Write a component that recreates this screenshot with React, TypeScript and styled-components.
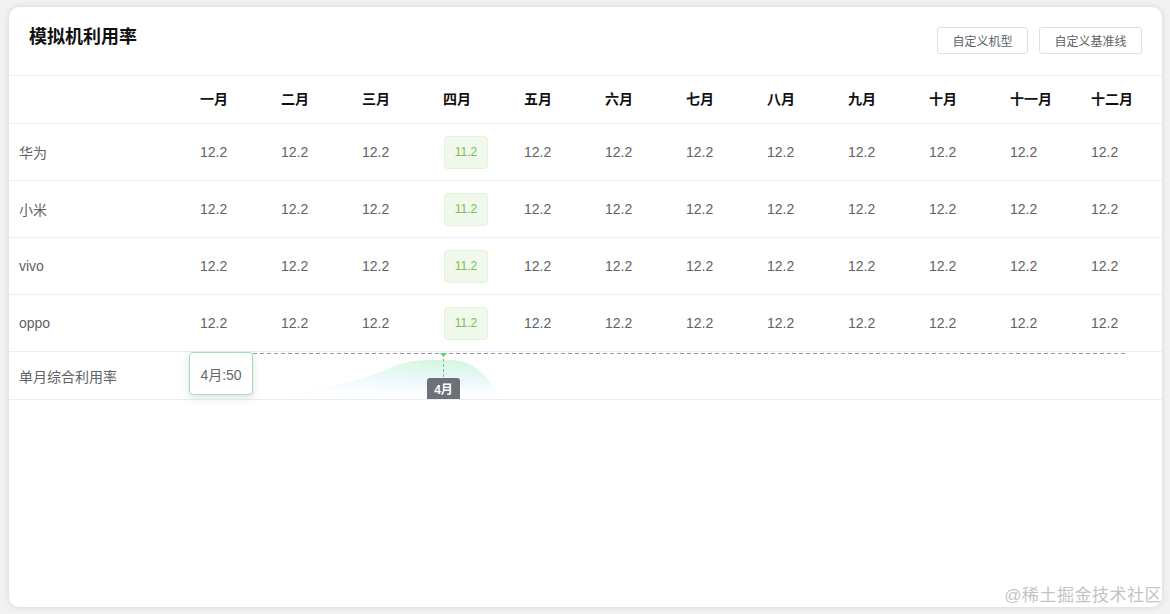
import React from 'react';
import styled, { createGlobalStyle } from 'styled-components';

const GlobalStyle = createGlobalStyle`
  html, body {
    margin: 0;
    padding: 0;
    background: #f2f2f2;
  }
  body {
    padding: 7px 8px 7px 9px;
    font-family: "Liberation Sans", "Noto Sans CJK SC", sans-serif;
  }
`;

const months = ['一月', '二月', '三月', '四月', '五月', '六月', '七月', '八月', '九月', '十月', '十一月', '十二月'];
const brands = ['华为', '小米', 'vivo', 'oppo'];
const highlightIndex = 3; // 四月

const Card = styled.div`
  position: relative;
  width: 1153px;
  height: 600px;
  box-sizing: border-box;
  background: #fff;
  border-radius: 10px;
  box-shadow: 0 0 6px rgba(0, 0, 0, 0.12);
  overflow: hidden;
`;

const Header = styled.div`
  height: 68px;
  padding: 0 20px;
  display: flex;
  justify-content: space-between;
  align-items: flex-start;
  border-bottom: 1px solid #ebeef5;
`;

const Title = styled.h2`
  margin: 0;
  padding-top: 20px;
  font-size: 18px;
  line-height: 20px;
  font-weight: 700;
  color: #111;
`;

const Actions = styled.div`
  display: flex;
  gap: 11px;
  padding-top: 20px;
`;

const Button = styled.button<{ w: number }>`
  width: ${(p) => p.w + 'px'};
  height: 27px;
  box-sizing: border-box;
  border: 1px solid #dcdfe6;
  border-radius: 3px;
  background: #fff;
  color: #606266;
  font-size: 12px;
  font-family: inherit;
  padding: 0;
  cursor: pointer;
`;

const Row = styled.div<{ h: number }>`
  display: grid;
  grid-template-columns: 181px repeat(12, 81px);
  height: ${(p) => p.h + 'px'};
  border-bottom: 1px solid #ebeef5;
`;

const Cell = styled.div<{ head?: boolean }>`
  display: flex;
  align-items: center;
  padding-left: 10px;
  padding-bottom: ${(p) => (p.head ? '4px' : '0')};
  font-size: 14px;
  color: ${(p) => (p.head ? '#111' : '#606266')};
  font-weight: ${(p) => (p.head ? 700 : 400)};
  white-space: nowrap;
`;

const LabelCell = styled(Cell)`
  padding-left: 10px;
`;

const TagWrap = styled.div`
  display: flex;
  align-items: center;
  padding-left: 11px;
`;

const Tag = styled.span`
  display: inline-flex;
  align-items: center;
  justify-content: center;
  width: 44px;
  height: 33px;
  box-sizing: border-box;
  background: #f0f9eb;
  border: 1px solid #e1f3d8;
  border-radius: 4px;
  color: #72c250;
  font-size: 12px;
`;

const ChartCell = styled.div`
  grid-column: 2 / span 12;
  position: relative;
`;

const Tooltip = styled.div`
  position: absolute;
  left: -1px;
  top: 0;
  width: 64px;
  height: 43px;
  box-sizing: border-box;
  display: flex;
  align-items: center;
  justify-content: center;
  background: #fff;
  border: 1px solid #9fe3b0;
  border-radius: 4px;
  box-shadow: 0 3px 8px rgba(0, 0, 0, 0.12);
  color: #666;
  font-size: 14px;
`;

const AxisLabel = styled.div`
  position: absolute;
  left: 237px;
  top: 26px;
  width: 33px;
  height: 21px;
  display: flex;
  align-items: center;
  justify-content: center;
  background: #6e7079;
  border-radius: 3px 3px 0 0;
  color: #fff;
  font-size: 12px;
  font-weight: 700;
`;

const Watermark = styled.div`
  position: absolute;
  right: 0;
  bottom: 1px;
  font-size: 17px;
  color: #c4c4c4;
  letter-spacing: 0.5px;
`;

function UsageChart() {
  // 点位: x = i * 85, 四月约在 253
  return (
    <svg width="972" height="47" style={{ display: 'block' }}>
      <defs>
        <linearGradient id="areaV" x1="0" y1="0" x2="0" y2="1">
          <stop offset="0" stopColor="#a6f0bd" stopOpacity="0.5" />
          <stop offset="0.6" stopColor="#d6f0fb" stopOpacity="0.45" />
          <stop offset="1" stopColor="#ffffff" stopOpacity="0.1" />
        </linearGradient>
        <linearGradient id="areaMask" x1="0" y1="0" x2="1" y2="0">
          <stop offset="0" stopColor="#fff" stopOpacity="0" />
          <stop offset="0.12" stopColor="#fff" stopOpacity="0.4" />
          <stop offset="0.25" stopColor="#fff" stopOpacity="1" />
          <stop offset="0.35" stopColor="#fff" stopOpacity="1" />
          <stop offset="0.5" stopColor="#fff" stopOpacity="0.5" />
          <stop offset="1" stopColor="#fff" stopOpacity="0.6" />
        </linearGradient>
        <mask id="fade">
          <rect x="0" y="0" width="972" height="47" fill="url(#areaMask)" />
        </mask>
      </defs>
      <path
        d="M0 46 C 90 44, 150 38, 200 16 C 220 7, 238 8, 253 8 C 272 8, 284 10, 298 28 C 308 42, 318 45, 340 45 L 935 44 L 935 47 L 0 47 Z"
        fill="url(#areaV)"
        mask="url(#fade)"
      />
      <line x1="63" y1="1.5" x2="935" y2="1.5" stroke="#999" strokeDasharray="4 3" />
      <line x1="253.5" y1="2" x2="253.5" y2="26" stroke="#7bbf8a" strokeDasharray="3 2" />
      <path d="M250 1 L257 1 L253.5 5 Z" fill="#5fd07a" />
    </svg>
  );
}

export default function App() {
  return (
    <>
      <GlobalStyle />
      <Card>
        <Header>
          <Title>模拟机利用率</Title>
          <Actions>
            <Button w={91}>自定义机型</Button>
            <Button w={103}>自定义基准线</Button>
          </Actions>
        </Header>
        <Row h={47}>
          <LabelCell head />
          {months.map((m) => (
            <Cell head key={m}>
              {m}
            </Cell>
          ))}
        </Row>
        {brands.map((b) => (
          <Row h={56} key={b}>
            <LabelCell>{b}</LabelCell>
            {months.map((m, i) =>
              i === highlightIndex ? (
                <TagWrap key={m}>
                  <Tag>11.2</Tag>
                </TagWrap>
              ) : (
                <Cell key={m}>12.2</Cell>
              )
            )}
          </Row>
        ))}
        <Row h={47}>
          <LabelCell>单月综合利用率</LabelCell>
          <ChartCell>
            <UsageChart />
            <Tooltip>4月:50</Tooltip>
            <AxisLabel>4月</AxisLabel>
          </ChartCell>
        </Row>
        <Watermark>@稀土掘金技术社区</Watermark>
      </Card>
    </>
  );
}
